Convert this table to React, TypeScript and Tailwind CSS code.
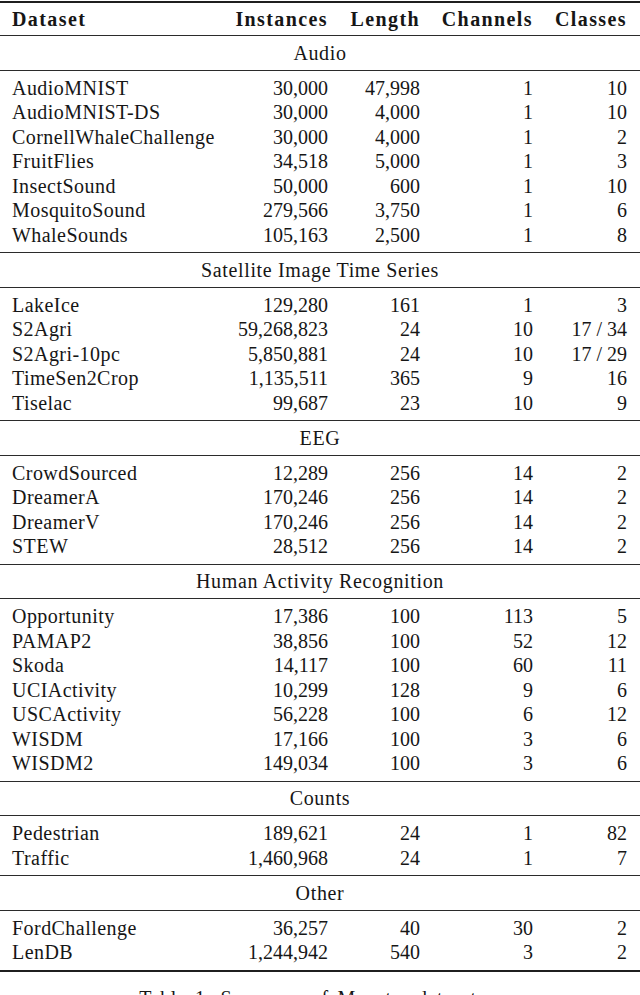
type Row = [string, string, string, string, string];

const sections: { title: string; rows: Row[] }[] = [
  {
    title: 'Audio',
    rows: [
      ['AudioMNIST', '30,000', '47,998', '1', '10'],
      ['AudioMNIST-DS', '30,000', '4,000', '1', '10'],
      ['CornellWhaleChallenge', '30,000', '4,000', '1', '2'],
      ['FruitFlies', '34,518', '5,000', '1', '3'],
      ['InsectSound', '50,000', '600', '1', '10'],
      ['MosquitoSound', '279,566', '3,750', '1', '6'],
      ['WhaleSounds', '105,163', '2,500', '1', '8'],
    ],
  },
  {
    title: 'Satellite Image Time Series',
    rows: [
      ['LakeIce', '129,280', '161', '1', '3'],
      ['S2Agri', '59,268,823', '24', '10', '17 / 34'],
      ['S2Agri-10pc', '5,850,881', '24', '10', '17 / 29'],
      ['TimeSen2Crop', '1,135,511', '365', '9', '16'],
      ['Tiselac', '99,687', '23', '10', '9'],
    ],
  },
  {
    title: 'EEG',
    rows: [
      ['CrowdSourced', '12,289', '256', '14', '2'],
      ['DreamerA', '170,246', '256', '14', '2'],
      ['DreamerV', '170,246', '256', '14', '2'],
      ['STEW', '28,512', '256', '14', '2'],
    ],
  },
  {
    title: 'Human Activity Recognition',
    rows: [
      ['Opportunity', '17,386', '100', '113', '5'],
      ['PAMAP2', '38,856', '100', '52', '12'],
      ['Skoda', '14,117', '100', '60', '11'],
      ['UCIActivity', '10,299', '128', '9', '6'],
      ['USCActivity', '56,228', '100', '6', '12'],
      ['WISDM', '17,166', '100', '3', '6'],
      ['WISDM2', '149,034', '100', '3', '6'],
    ],
  },
  {
    title: 'Counts',
    rows: [
      ['Pedestrian', '189,621', '24', '1', '82'],
      ['Traffic', '1,460,968', '24', '1', '7'],
    ],
  },
  {
    title: 'Other',
    rows: [
      ['FordChallenge', '36,257', '40', '30', '2'],
      ['LenDB', '1,244,942', '540', '3', '2'],
    ],
  },
];

const cols = 'grid grid-cols-[216px_100px_92px_113px_94px] pl-[12px] pr-[13px]';

function ThinRule() {
  return <div className="h-[1px] bg-[#2b2b2b]" />;
}

function ThickRule() {
  return <div className="h-[2px] bg-[#1f1f1f]" />;
}

export default function App() {
  return (
    <div className="w-[640px] min-h-[995px] bg-white pt-[1px] text-[20px] text-[#161616] font-[family-name:'Liberation_Serif','Times_New_Roman',serif]">
      <ThickRule />

      {/* Header */}
      <div className={`${cols} h-[32px] items-center font-bold tracking-[1.4px]`}>
        <span>Dataset</span>
        <span className="text-right">Instances</span>
        <span className="text-right">Length</span>
        <span className="text-right">Channels</span>
        <span className="text-right">Classes</span>
      </div>

      {sections.map((section) => (
        <div key={section.title}>
          <ThinRule />
          <div className="h-[33.5px] flex items-center justify-center tracking-[0.65px]">
            {section.title}
          </div>
          <ThinRule />
          <div className="py-[5px]">
            {section.rows.map((row) => (
              <div key={row[0]} className={`${cols} h-[24.5px] items-center leading-[24.5px]`}>
                <span className="tracking-[0.45px] whitespace-nowrap">{row[0]}</span>
                <span className="text-right">{row[1]}</span>
                <span className="text-right">{row[2]}</span>
                <span className="text-right">{row[3]}</span>
                <span className="text-right whitespace-pre">{row[4]}</span>
              </div>
            ))}
          </div>
        </div>
      ))}

      <ThickRule />

      {/* Caption */}
      <p className="mt-[14px] pr-[10px] text-center leading-[24px] tracking-[0.6px] [word-spacing:3px]">
        Table 1: Summary of Monster datasets.
      </p>
    </div>
  );
}
